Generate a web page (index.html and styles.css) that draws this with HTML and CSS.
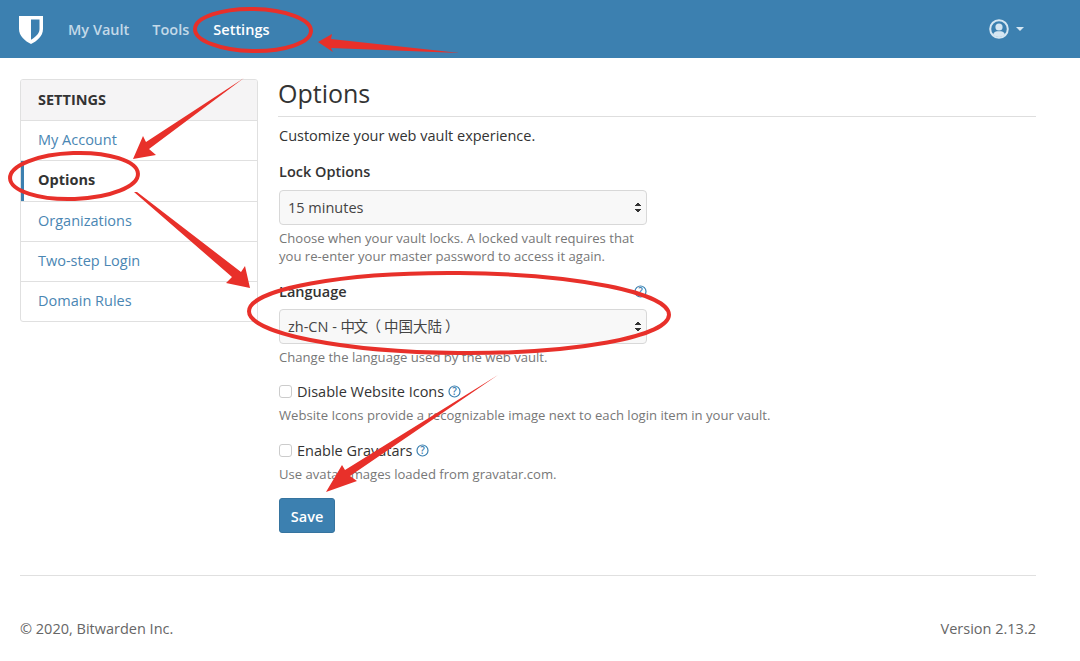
FILE: index.html
```html
<!DOCTYPE html>
<html lang="en">
<head>
<meta charset="utf-8">
<title>Options</title>
<link rel="stylesheet" href="styles.css">
</head>
<body>
<header class="navbar">
  <svg class="logo" viewBox="0 0 24 28" width="24" height="28"><path fill="#fff" d="M0 0H24V13C24 20 18 25 12 28C6 25 0 20 0 13Z"/><path fill="#3c80b0" d="M12 3.500H20.500V13C20.500 17.500 16.500 21 12 23.700Z"/></svg>
  <nav class="nav-links">
    <a class="nav-link">My Vault</a>
    <a class="nav-link">Tools</a>
    <a class="nav-link active">Settings</a>
  </nav>
  <div class="account">
    <svg class="avatar" viewBox="0 0 20 20" width="20" height="20"><circle cx="10" cy="10" r="8.800" fill="none" stroke="#d5e6f2" stroke-width="2"/><circle cx="10" cy="8" r="3.600" fill="#d5e6f2"/><path fill="#d5e6f2" d="M4 15.500C5 12.800 7 12.300 10 12.300C13 12.300 15 12.800 16 15.500C14.500 17.200 12.500 18 10 18C7.500 18 5.500 17.200 4 15.500Z"/></svg>
    <span class="caret"></span>
  </div>
</header>

<div class="container">
  <div class="page">
    <aside class="card">
      <div class="card-header">SETTINGS</div>
      <a class="side-item">My Account</a>
      <a class="side-item current">Options</a>
      <a class="side-item">Organizations</a>
      <a class="side-item">Two-step Login</a>
      <a class="side-item">Domain Rules</a>
    </aside>
    <main class="content">
      <h1 class="title">Options</h1>
      <p class="intro">Customize your web vault experience.</p>

      <div class="form-col">
        <div class="group">
          <div class="label-row"><label class="label">Lock Options</label></div>
          <div class="select"><span class="value">15 minutes</span><span class="arrows"></span></div>
          <p class="help">Choose when your vault locks. A locked vault requires that you re-enter your master password to access it again.</p>
        </div>
        <div class="group">
          <div class="label-row">
            <label class="label">Language</label>
            <svg class="q" viewBox="0 0 13 13" width="13" height="13"><circle cx="6.500" cy="6.500" r="5.500" fill="none" stroke="#3c80b0" stroke-width="1.200"/><text x="6.500" y="9.800" text-anchor="middle" class="q-text">?</text></svg>
          </div>
          <div class="select"><span class="value">zh-CN - <span class="tight">中文</span><span class="open">（</span>中国大陆<span class="close">）</span></span><span class="arrows"></span></div>
          <p class="help">Change the language used by the web vault.</p>
        </div>
      </div>

      <div class="check-group">
        <div class="check-row"><span class="box"></span><span>Disable Website Icons</span>
          <svg class="q" viewBox="0 0 13 13" width="13" height="13"><circle cx="6.500" cy="6.500" r="5.500" fill="none" stroke="#3c80b0" stroke-width="1.200"/><text x="6.500" y="9.800" text-anchor="middle" class="q-text">?</text></svg></div>
        <p class="help">Website Icons provide a recognizable image next to each login item in your vault.</p>
      </div>
      <div class="check-group">
        <div class="check-row"><span class="box"></span><span>Enable Gravatars</span>
          <svg class="q" viewBox="0 0 13 13" width="13" height="13"><circle cx="6.500" cy="6.500" r="5.500" fill="none" stroke="#3c80b0" stroke-width="1.200"/><text x="6.500" y="9.800" text-anchor="middle" class="q-text">?</text></svg></div>
        <p class="help">Use avatar images loaded from gravatar.com.</p>
      </div>
      <button class="save">Save</button>
    </main>
  </div>
  <footer class="footer">
    <span>© 2020, Bitwarden Inc.</span>
    <span>Version 2.13.2</span>
  </footer>
</div>

<svg class="marks" viewBox="0 0 1080 661" width="1080" height="661">
  <g fill="none" stroke="#e8302a" stroke-width="4">
    <ellipse cx="253" cy="30" rx="58" ry="21" transform="rotate(1 253 30)"/>
    <ellipse cx="74" cy="176" rx="64" ry="23" transform="rotate(-2 74 176)"/>
    <ellipse cx="459" cy="313" rx="210" ry="40" transform="rotate(0.500 459 313)"/>
  </g>
  <g fill="#e8302a">
    <path d="M318 42L332 34L331 39L460 53L331 48L333 52Z"/>
    <path d="M244 78L149 149L156 155L133 159L143 136L146 142Z"/>
    <path d="M134 192L137 192L241 272L245 266L250 288L226 283L232 277Z"/>
    <path d="M498 375L350 476L357 481L326 492L342 465L345 470Z"/>
  </g>
</svg>
</body>
</html>
```
FILE: styles.css
```css
* { box-sizing: border-box; }
html, body { margin: 0; padding: 0; }
body {
  width: 1080px;
  height: 661px;
  overflow: hidden;
  position: relative;
  background: #fff;
  color: #333;
  font-family: "Open Sans", "Noto Sans CJK SC", sans-serif;
  font-size: 14.500px;
  line-height: 21px;
}
.navbar {
  height: 58px;
  background: #3c80b0;
  display: flex;
  align-items: center;
  padding: 0 56px 0 19px;
}
.logo { display: block; margin-top: 1px; flex: none; }
.nav-links { display: flex; margin-left: 25px; gap: 23px; }
.nav-link { color: #c3d9e8; font-weight: 600; }
.nav-link.active { color: #fff; margin-left: 1px; }
.account { margin-left: auto; display: flex; align-items: center; gap: 7px; }
.avatar { display: block; }
.caret { width: 0; height: 0; border: 4.500px solid transparent; border-top-color: #d5e6f2; border-bottom: 0; }
.container { width: 1016px; margin-left: 20px; }
.page { display: flex; padding-top: 21px; height: 517px; }
.card {
  width: 238px;
  height: 243px;
  flex: none;
  border: 1px solid #e0e0e0;
  border-radius: 3px;
  overflow: hidden;
}
.card-header {
  height: 40px;
  background: #f5f4f5;
  font-weight: 700;
  padding: 8.500px 17px;
}
.side-item {
  display: block;
  height: 40.300px;
  border-top: 1px solid #e0e0e0;
  padding: 8.200px 17px;
  color: #4a86b3;
}
.side-item.current {
  color: #333;
  font-weight: 700;
  box-shadow: inset 3px 0 0 #3c80b0;
}
.content { margin-left: 21px; flex: 1; }
.title {
  margin: 0 0 0 -1px;
  font-weight: 400;
  font-size: 25px;
  line-height: 28px;
  height: 38px;
  border-bottom: 1px solid #dedede;
}
.intro { margin: 8px 0 15px; }
.form-col { width: 368px; }
.group { margin-bottom: 15px; }
.group:first-child { margin-bottom: 16px; }
.group:first-child .label-row { margin-bottom: 8px; }
.label-row { display: flex; justify-content: space-between; align-items: center; height: 21px; margin-bottom: 7px; }
.label { font-weight: 600; }
.select {
  height: 35px;
  border: 1px solid #d8d8d8;
  border-radius: 4px;
  background: #f8f8f8;
  display: flex;
  justify-content: space-between;
  align-items: center;
  padding: 0 5px 0 8px;
  color: #444;
}
.value { white-space: nowrap; flex: none; }
.tight { letter-spacing: -1.500px; }
.open { margin-right: 3px; }
.close { margin-left: 3px; letter-spacing: -3px; }
.arrows {
  width: 6px;
  height: 11px;
  display: block;
  background:
    linear-gradient(135deg, transparent 50%, #333 50%) 0 0 / 3px 4px no-repeat,
    linear-gradient(225deg, transparent 50%, #333 50%) 3px 0 / 3px 4px no-repeat,
    linear-gradient(45deg, transparent 50%, #333 50%) 0 7px / 3px 4px no-repeat,
    linear-gradient(315deg, transparent 50%, #333 50%) 3px 7px / 3px 4px no-repeat;
}
.help { margin: 4px 0 0; font-size: 13.100px; line-height: 18px; color: #777; }
.check-group { margin-bottom: 16px; }
.check-group + .check-group { margin-bottom: 15px; }
.check-row { display: flex; align-items: center; height: 21px; }
.box {
  width: 13px;
  height: 13px;
  border: 1px solid #ccc;
  border-radius: 3px;
  background: #fff;
  margin-right: 5px;
}
.check-row .q { margin-left: 4px; }
.q { display: block; flex: none; }
.q-text { font-size: 10px; font-weight: 600; fill: #3c80b0; font-family: "Open Sans", sans-serif; }
.save {
  display: block;
  width: 56px;
  height: 35px;
  background: #3c80b0;
  border: 1px solid #36749f;
  border-radius: 3px;
  color: #fff;
  font: 600 14.500px/21px "Open Sans", sans-serif;
  padding: 1px 0 0;
}
.footer {
  border-top: 1px solid #e0e0e0;
  display: flex;
  justify-content: space-between;
  padding-top: 42px;
  color: #666;
}
.marks { position: absolute; left: 0; top: 0; pointer-events: none; }
```
